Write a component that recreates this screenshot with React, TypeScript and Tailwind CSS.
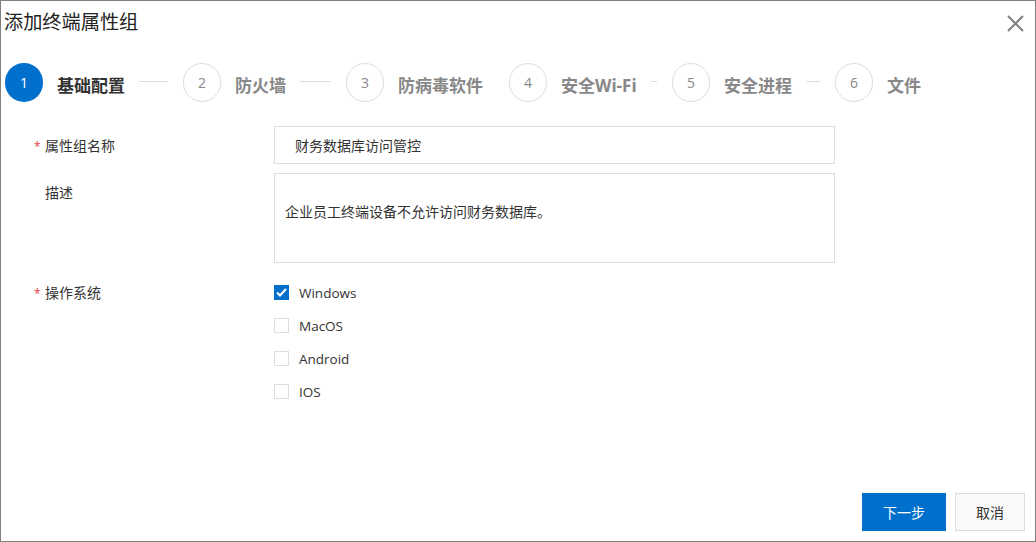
const font = 'font-["Open_Sans","Noto_Sans_CJK_SC",sans-serif]';

const steps = [
  { n: 1, title: '基础配置', width: 'w-[178px]', line: true },
  { n: 2, title: '防火墙', width: 'w-[163px]', line: true },
  { n: 3, title: '防病毒软件', width: 'w-[163px]', line: false },
  { n: 4, title: '安全Wi-Fi', width: 'w-[163px]', line: true },
  { n: 5, title: '安全进程', width: 'w-[163px]', line: true },
  { n: 6, title: '文件', width: 'w-[100px]', line: false },
];

const systems = [
  { name: 'Windows', checked: true },
  { name: 'MacOS', checked: false },
  { name: 'Android', checked: false },
  { name: 'IOS', checked: false },
];

function Label({ text, required }: { text: string; required?: boolean }) {
  return (
    <div className="w-[273px] flex shrink-0 pl-[33px] text-[14px] leading-[20px] text-[#333333]">
      <span className="w-[11px] text-[12px] mt-px text-[#e4393c]">{required ? '*' : ''}</span>
      <span>{text}</span>
    </div>
  );
}

export default function App() {
  return (
    <div className={`${font} w-[1036px] h-[542px] bg-white border border-[#808080] flex flex-col overflow-hidden`}>
      <div className="flex items-start justify-between pl-[3px] pr-[11px] pt-[7px] h-[62px]">
        <h1 className="text-[19.2px] leading-[28px] text-[#222222]">添加终端属性组</h1>
        <svg width="17" height="17" viewBox="0 0 17 17" className="mt-[7px] text-[#808080]" fill="none" stroke="currentColor" strokeWidth="2">
          <path d="M1 1l15 15M16 1L1 16" />
        </svg>
      </div>

      <div className="flex pl-[4px] h-[39px]">
        {steps.map(s => (
          <div key={s.n} className={`${s.width} flex items-center shrink-0`}>
            <div className={s.n === 1
              ? 'w-[38px] h-[39px] rounded-full bg-[#0070cc] text-white flex items-center justify-center text-[14px] shrink-0'
              : 'w-[38px] h-[39px] rounded-full border border-[#dddddd] text-[#888888] flex items-center justify-center text-[14px] shrink-0'}>
              {s.n}
            </div>
            <span className={s.n === 1
              ? 'ml-[14px] text-[17px] leading-[24px] mt-[7px] font-bold text-[#333333] whitespace-nowrap'
              : 'ml-[14px] text-[17px] leading-[24px] mt-[7px] font-bold text-[#888888] whitespace-nowrap'}>
              {s.title}
            </span>
            {s.line && <div className="flex-1 h-px bg-[#dddddd] ml-[14px] mr-[15px] mb-[3px]" />}
          </div>
        ))}
      </div>

      <div className="flex mt-[24px] items-center">
        <div className="pt-[2px]"><Label text="属性组名称" required /></div>
        <div className="w-[561px] h-[38px] border border-[#dddddd] pl-[20px] flex items-center text-[14px] text-[#333333]">
          财务数据库访问管控
        </div>
      </div>

      <div className="flex mt-[9px]">
        <div className="pt-[10px]"><Label text="描述" /></div>
        <div className="w-[561px] h-[90px] border border-[#dddddd] pl-[10px] pt-[28px] text-[14px] leading-[20px] text-[#333333]">
          企业员工终端设备不允许访问财务数据库。
        </div>
      </div>

      <div className="flex mt-[20px]">
        <Label text="操作系统" required />
        <div className="flex flex-col gap-[13px]">
          {systems.map(o => (
            <div key={o.name} className="flex items-center h-[20px] text-[13.5px] text-[#333333]">
              {o.checked ? (
                <span className="w-[15px] h-[15px] -mt-[2px] bg-[#0070cc] flex items-center justify-center">
                  <svg width="11" height="9" viewBox="0 0 11 9" fill="none" stroke="white" strokeWidth="2">
                    <path d="M1 4.5l3 3 6-6.5" />
                  </svg>
                </span>
              ) : (
                <span className="w-[15px] h-[15px] -mt-[2px] border border-[#dddddd]" />
              )}
              <span className="ml-[10px]">{o.name}</span>
            </div>
          ))}
        </div>
      </div>

      <div className="mt-auto flex justify-end gap-[9px] pr-[10px] pb-[10px]">
        <button className="w-[84px] h-[38px] bg-[#0070cc] text-white text-[14px]">下一步</button>
        <button className="w-[70px] h-[38px] bg-[#f9f9f9] border border-[#dddddd] text-[#333333] text-[14px]">取消</button>
      </div>
    </div>
  );
}
